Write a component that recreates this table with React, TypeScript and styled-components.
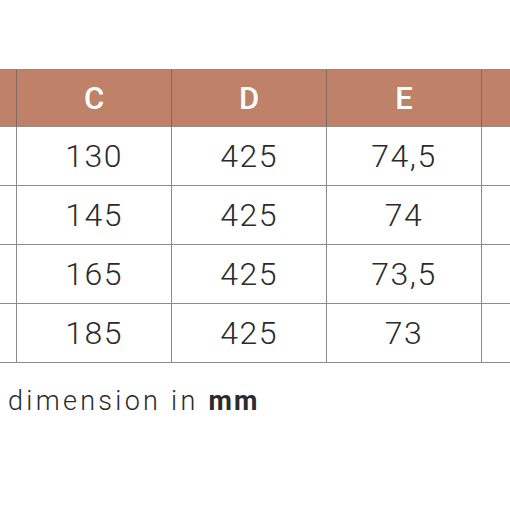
import styled, {createGlobalStyle} from 'styled-components'

const rows = [
    ['', '130', '425', '74,5', ''],
    ['', '145', '425', '74', ''],
    ['', '165', '425', '73,5', ''],
    ['', '185', '425', '73', ''],
]

// first and last columns are only partly in view
const heads = ['', 'C', 'D', 'E', '']

export default function App() {
    return (
        <Page>
            <GlobalStyle />
            <Grid>
                {heads.map((h, i) => (
                    <HeadCell key={i}>{h}</HeadCell>
                ))}
                {rows.map((row, r) =>
                    row.map((value, c) => <Cell key={r + '-' + c}>{value}</Cell>),
                )}
            </Grid>
            <Note>
                dimension in <b>mm</b>
            </Note>
        </Page>
    )
}

const GlobalStyle = createGlobalStyle`
    html, body {
        margin: 0;
        padding: 0;
        background: #ffffff;
        overflow: hidden;
    }
`

const Page = styled.div`
    width: 510px;
    height: 510px;
    overflow: hidden;
    padding-top: 69px;
    box-sizing: border-box;
    font-family: Roboto, 'Liberation Sans', sans-serif;
`

const Grid = styled.div`
    display: grid;
    grid-template-columns: repeat(5, 155px);
    grid-template-rows: 57px repeat(4, 59px);
    margin-left: -138px;
    width: 775px;
    border-top: 1px solid #8c8c8c;
`

const HeadCell = styled.div`
    display: flex;
    align-items: center;
    justify-content: center;
    background: #bf8268;
    color: #ffffff;
    font-size: 31px;
    font-weight: 500;
    border-right: 1px solid #7d6a62;
    border-bottom: 1px solid #8c8c8c;
    padding-top: 1px;
`

const Cell = styled.div`
    display: flex;
    align-items: center;
    justify-content: center;
    color: #2b2b2b;
    font-size: 32px;
    font-weight: 300;
    letter-spacing: 1.5px;
    border-right: 1px solid #8c8c8c;
    border-bottom: 1px solid #8c8c8c;
`

const Note = styled.p`
    margin: 22px 0 0 8px;
    color: #2b2b2b;
    font-size: 27px;
    font-weight: 300;
    letter-spacing: 3.3px;

    b {
        font-weight: 700;
        letter-spacing: 2px;
    }
`
